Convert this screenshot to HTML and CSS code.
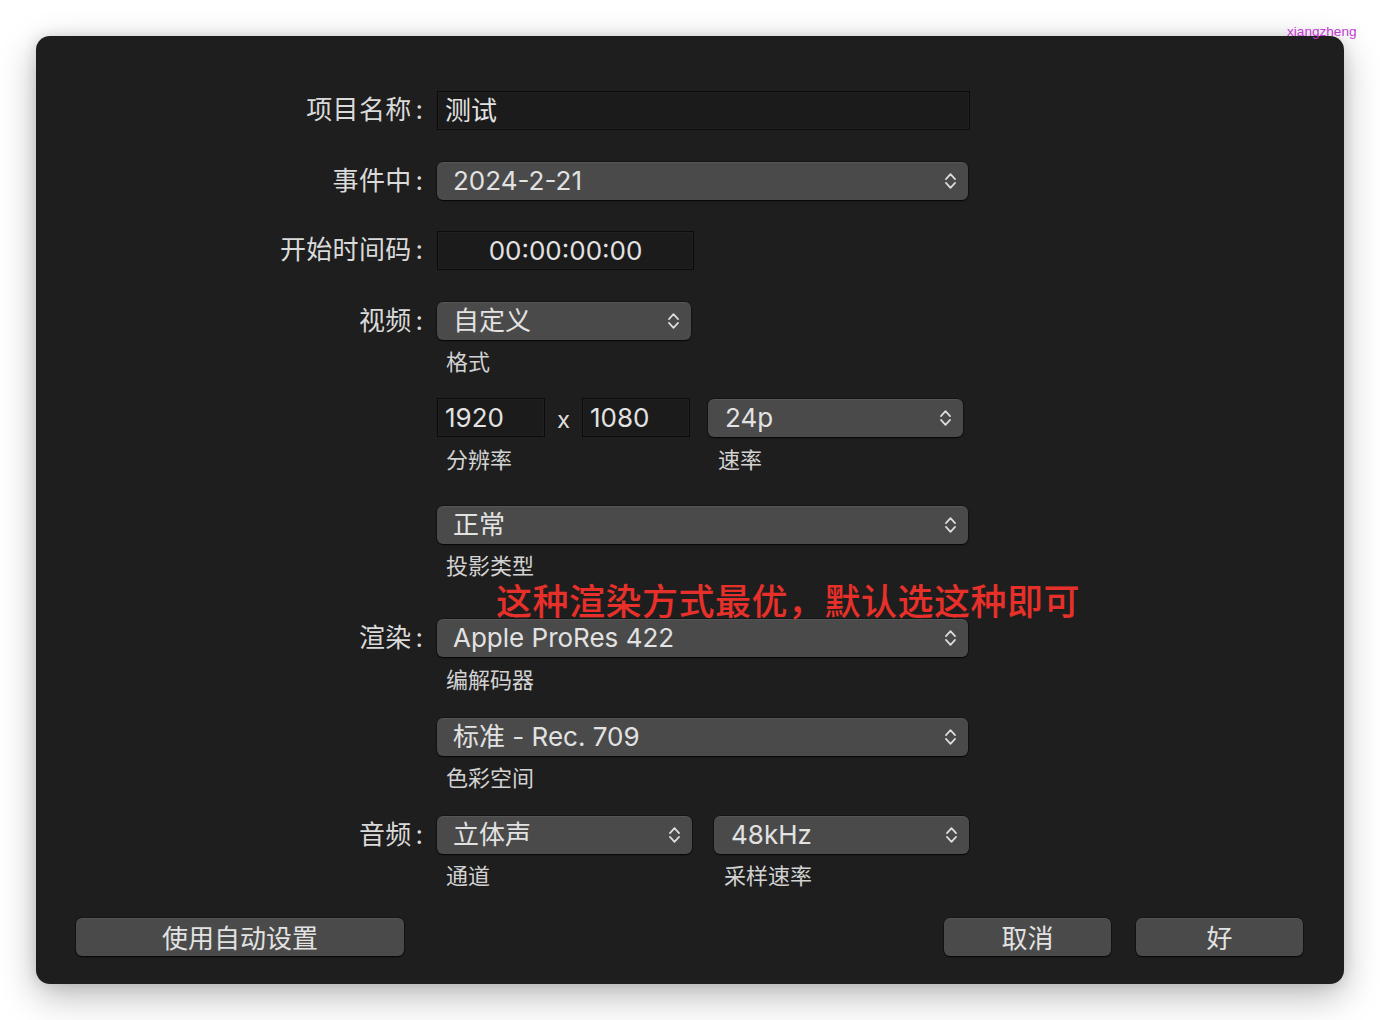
FILE: index.html
```html
<!DOCTYPE html>
<html lang="zh-CN">
<head>
<meta charset="utf-8">
<title>项目设置</title>
<link rel="stylesheet" href="styles.css">
</head>
<body>
<div class="watermark">xiangzheng</div>
<div class="window">
  <div class="form">
    <div class="row row-name">
      <div class="label">项目名称<span class="colon">:</span></div>
      <div class="ctl"><div class="field w-full">测试</div></div>
    </div>

    <div class="row row-event">
      <div class="label">事件中<span class="colon">:</span></div>
      <div class="ctl">
        <div class="popup w-full"><span>2024-2-21</span><svg class="chev" viewBox="0 0 12 18"><path d="M1.8 7.2 L6 2.6 L10.2 7.2 M1.8 10.8 L6 15.4 L10.2 10.8"/></svg></div>
      </div>
    </div>

    <div class="row row-tc">
      <div class="label">开始时间码<span class="colon">:</span></div>
      <div class="ctl"><div class="field w-tc center">00:00:00:00</div></div>
    </div>

    <div class="row row-video">
      <div class="label">视频<span class="colon">:</span></div>
      <div class="ctl">
        <div class="popup w-half"><span>自定义</span><svg class="chev" viewBox="0 0 12 18"><path d="M1.8 7.2 L6 2.6 L10.2 7.2 M1.8 10.8 L6 15.4 L10.2 10.8"/></svg></div>
        <div class="caption">格式</div>
        <div class="res-grid">
          <div class="res-fields">
            <div class="field w-num">1920</div>
            <span class="times">x</span>
            <div class="field w-num">1080</div>
          </div>
          <div class="popup short-pad"><span>24p</span><svg class="chev" viewBox="0 0 12 18"><path d="M1.8 7.2 L6 2.6 L10.2 7.2 M1.8 10.8 L6 15.4 L10.2 10.8"/></svg></div>
          <div class="caption cap-tight">分辨率</div>
          <div class="caption cap-tight">速率</div>
        </div>
        <div class="popup w-full gap-big"><span>正常</span><svg class="chev" viewBox="0 0 12 18"><path d="M1.8 7.2 L6 2.6 L10.2 7.2 M1.8 10.8 L6 15.4 L10.2 10.8"/></svg></div>
        <div class="caption">投影类型</div>
      </div>
    </div>

    <div class="row row-render">
      <div class="label">渲染<span class="colon">:</span></div>
      <div class="ctl">
        <div class="popup w-full"><span>Apple ProRes 422</span><svg class="chev" viewBox="0 0 12 18"><path d="M1.8 7.2 L6 2.6 L10.2 7.2 M1.8 10.8 L6 15.4 L10.2 10.8"/></svg></div>
        <div class="caption cap-tight">编解码器</div>
        <div class="popup w-full gap-mid"><span>标准 - Rec. 709</span><svg class="chev" viewBox="0 0 12 18"><path d="M1.8 7.2 L6 2.6 L10.2 7.2 M1.8 10.8 L6 15.4 L10.2 10.8"/></svg></div>
        <div class="caption">色彩空间</div>
      </div>
    </div>

    <div class="row row-audio">
      <div class="label">音频<span class="colon">:</span></div>
      <div class="ctl">
        <div class="audio-grid">
          <div class="popup"><span>立体声</span><svg class="chev" viewBox="0 0 12 18"><path d="M1.8 7.2 L6 2.6 L10.2 7.2 M1.8 10.8 L6 15.4 L10.2 10.8"/></svg></div>
          <div class="popup short-pad"><span>48kHz</span><svg class="chev" viewBox="0 0 12 18"><path d="M1.8 7.2 L6 2.6 L10.2 7.2 M1.8 10.8 L6 15.4 L10.2 10.8"/></svg></div>
          <div class="caption">通道</div>
          <div class="caption">采样速率</div>
        </div>
      </div>
    </div>
  </div>

  <div class="note">这种渲染方式最优，默认选这种即可</div>

  <div class="buttons">
    <div class="btn btn-auto">使用自动设置</div>
    <div class="btn-group">
      <div class="btn btn-std">取消</div>
      <div class="btn btn-std">好</div>
    </div>
  </div>
</div>
</body>
</html>
```

FILE: styles.css
```css
html, body {
  margin: 0;
  padding: 0;
  background: #ffffff;
}

body {
  width: 1380px;
  height: 1020px;
  position: relative;
  overflow: hidden;
  font-family: Inter, "Noto Sans CJK SC", sans-serif;
}

.watermark {
  position: absolute;
  top: 24px;
  left: 1287px;
  font-family: "Liberation Sans", Arial, sans-serif;
  font-size: 13.6px;
  line-height: 16px;
  color: #c23ad2;
  z-index: 2;
}

.window {
  position: relative;
  margin: 36px 0 0 36px;
  width: 1308px;
  height: 948px;
  box-sizing: border-box;
  background: #1e1e1e;
  border-radius: 14px;
  box-shadow: 0 12px 36px rgba(0, 0, 0, 0.28), 0 0 14px rgba(0, 0, 0, 0.12);
  padding: 55px 0 28px 0;
  display: flex;
  flex-direction: column;
}

.form {
  display: flex;
  flex-direction: column;
}

.row {
  display: grid;
  grid-template-columns: 387px 1fr;
  column-gap: 14px;
  align-items: start;
}

.row-name { margin-bottom: 32px; }
.row-event { margin-bottom: 31px; }
.row-tc { margin-bottom: 32px; }
.row-video { margin-bottom: 42px; }
.row-render { margin-bottom: 27px; }

.label {
  text-align: right;
  font-family: "Noto Sans CJK SC", sans-serif;
  font-size: 26px;
  line-height: 33px;
  color: #dadada;
  letter-spacing: 0.3px;
}

.label .colon {
  font-family: Inter, sans-serif;
  margin-left: 4px;
  letter-spacing: 0;
}

.ctl {
  display: flex;
  flex-direction: column;
  align-items: flex-start;
}

.field {
  box-sizing: border-box;
  height: 39px;
  background: #1b1b1b;
  border: 1px solid #0b0b0b;
  box-shadow: inset 0 0 0 1px #202020;
  color: #e2e2e2;
  font-size: 26px;
  line-height: 37px;
  padding: 0 7px;
  white-space: nowrap;
}

.field.center {
  text-align: center;
  padding: 0;
}

.w-full { width: 533px; }
.w-tc { width: 257px; }
.w-half { width: 254px; }
.w-num { width: 108px; }

.popup {
  box-sizing: border-box;
  height: 38px;
  background: #4a4a4a;
  border-radius: 6px;
  box-shadow: 0 1px 1.5px rgba(0, 0, 0, 0.75), 0 0 0 0.5px rgba(0, 0, 0, 0.5), inset 0 1px 0 rgba(255, 255, 255, 0.07);
  color: #e2e2e2;
  font-size: 26px;
  line-height: 38px;
  padding: 0 11px 0 16px;
  display: flex;
  align-items: center;
  justify-content: space-between;
  white-space: nowrap;
}

.popup.w-full { width: 531px; }
.popup.short-pad { padding-left: 17px; }

.chev {
  width: 13px;
  height: 20px;
  flex: none;
}

.chev path {
  fill: none;
  stroke: #dcdcdc;
  stroke-width: 1.6;
  stroke-linecap: round;
  stroke-linejoin: round;
}

.caption {
  font-family: "Noto Sans CJK SC", sans-serif;
  font-size: 22px;
  line-height: 26px;
  color: #d2d2d2;
  padding-left: 9px;
  margin-top: 7px;
}

.caption.cap-tight { margin-top: 8px; }

.res-grid {
  margin-top: 25px;
  display: grid;
  grid-template-columns: 253px 255px;
  column-gap: 18px;
  align-items: center;
}

.res-grid .caption:last-child { padding-left: 10px; }

.res-fields {
  display: flex;
  align-items: center;
}

.times {
  width: 37px;
  text-align: center;
  color: #dedede;
  font-size: 24px;
  line-height: 30px;
  padding-top: 4px;
}

.gap-big { margin-top: 35px; }
.gap-mid { margin-top: 27px; }

.audio-grid {
  display: grid;
  grid-template-columns: 255px 255px;
  column-gap: 22px;
}

.audio-grid .caption:last-child { padding-left: 10px; }

.note {
  position: absolute;
  left: 460px;
  top: 543px;
  font-family: "Noto Sans CJK SC", sans-serif;
  font-size: 36px;
  line-height: 40px;
  font-weight: 500;
  color: #e8302a;
  white-space: nowrap;
  letter-spacing: 0.5px;
}

.buttons {
  margin-top: auto;
  display: flex;
  justify-content: space-between;
  padding: 0 41px 0 40px;
}

.btn-group {
  display: flex;
  gap: 25px;
}

.btn {
  box-sizing: border-box;
  height: 38px;
  background: #4a4a4a;
  border-radius: 6px;
  box-shadow: 0 1px 1.5px rgba(0, 0, 0, 0.75), 0 0 0 0.5px rgba(0, 0, 0, 0.5), inset 0 1px 0 rgba(255, 255, 255, 0.07);
  color: #e2e2e2;
  font-family: "Noto Sans CJK SC", sans-serif;
  font-size: 26px;
  line-height: 37px;
  text-align: center;
}

.btn-auto { width: 328px; }
.btn-std { width: 167px; }
```
